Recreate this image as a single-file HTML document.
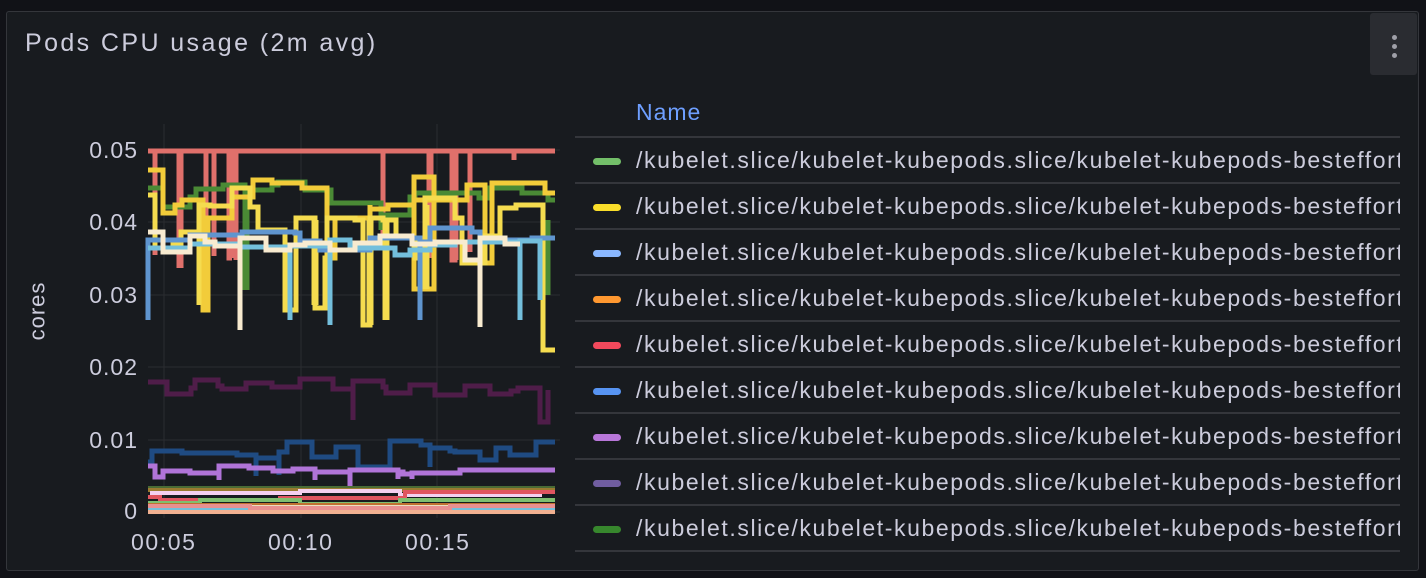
<!DOCTYPE html>
<html><head><style>
html,body{margin:0;padding:0;background:#111217;width:1426px;height:578px;overflow:hidden;font-family:"Liberation Sans",sans-serif}
.panel{position:absolute;left:6px;top:11px;width:1411px;height:558px;background:#181b1f;border:1px solid #34363b;border-radius:3px}
.title{position:absolute;left:25px;top:29px;font-size:25px;color:#ccccdc;letter-spacing:2.4px}
.menu{position:absolute;left:1370px;top:13px;width:47px;height:62px;background:#2a2c31;border-radius:3px}
.menu i{position:absolute;left:22px;width:5px;height:5px;border-radius:50%;background:#9fa0a8}
.ylab{position:absolute;color:#ccccdc;font-size:23px;text-align:right;width:70px;left:68px;letter-spacing:1px}
.xlab{position:absolute;color:#ccccdc;font-size:23px;top:529px;letter-spacing:1.6px}
.cores{position:absolute;left:8px;top:298px;color:#ccccdc;font-size:22px;letter-spacing:1px;transform:rotate(-90deg);transform-origin:center}
.legend{position:absolute;left:575px;top:90px;width:825px;height:470px;overflow:hidden}
.hdr{position:absolute;left:61px;top:9px;color:#6e9fff;font-size:23px;letter-spacing:1px}
.row{position:absolute;left:0;width:825px;height:46px;border-top:2px solid #34363b}
.row span{position:absolute;left:18px;top:20px;width:28px;height:7px;border-radius:4px}
.row b{position:absolute;left:61px;top:9px;font-weight:normal;color:#ccccdc;font-size:23px;letter-spacing:1.6px;white-space:nowrap}
</style></head><body>
<div class="panel"></div>
<div class="title">Pods CPU usage (2m avg)</div>
<div class="menu"><i style="top:22px"></i><i style="top:31px"></i><i style="top:40px"></i></div>
<div class="ylab" style="top:137px">0.05</div>
<div class="ylab" style="top:209px">0.04</div>
<div class="ylab" style="top:282px">0.03</div>
<div class="ylab" style="top:354px">0.02</div>
<div class="ylab" style="top:427px">0.01</div>
<div class="ylab" style="top:498px">0</div>
<div class="cores">cores</div>
<div class="xlab" style="left:131px">00:05</div>
<div class="xlab" style="left:268px">00:10</div>
<div class="xlab" style="left:405px">00:15</div>
<svg style="position:absolute;left:0;top:0" width="1426" height="578">
<g stroke="#2a2c31" stroke-width="1">
<line x1="164" y1="124" x2="164" y2="518"/><line x1="301" y1="124" x2="301" y2="518"/><line x1="437" y1="124" x2="437" y2="518"/>
<line x1="148" y1="150" x2="560" y2="150"/><line x1="148" y1="222" x2="560" y2="222"/><line x1="148" y1="295" x2="560" y2="295"/><line x1="148" y1="367" x2="560" y2="367"/><line x1="148" y1="440" x2="560" y2="440"/><line x1="148" y1="512" x2="560" y2="512"/>
</g>
<g fill="none" stroke-width="5" stroke-linejoin="miter">
<path stroke="#e0706b" d="M148 151H155V255V151H180V268V151H206V275V151H214V256V151H232V258V151H236V260V151H295V151H300V151H430V151H452V151V260H455V151H470V252V151H475V151H514V160V151H555M229 151V258H232M383 151V250"/>
<path stroke="#e0706b" stroke-width="7" d="M180 151V268M232 151V258M455 151V260M430 151V258"/>
<path stroke="#4a8a35" d="M148 188H163V207H190V197H196V189H223V185H245V190H272V185H278V182H305V190H331V203H381V230V215H385V218V215H410V197H415V193H475V193H479V198H490V188H522V193H548V200H555"/>
<path stroke="#4a8a35" stroke-width="7" d="M246 192V290M547 220V295"/>
<path stroke="#f2cc3a" d="M148 170H163V213H175V205H182V200H203V310H208V218H232V197H253V180H272V183H302V188H327V208H327V258H335V218H370V205H370V209H388V205H414V177H434V177V289H431H414V200H467V185H485V263H492V183H545V193H555"/>
<path stroke="#f5dc4f" d="M148 195H155V248H173V245H181V232H199V305V205H210V206H232V188H250V207H258V230H285V310H296V218H315V308H325V258H327V218H355V220H363V232V325H370V218H383V220H396V238H415V258H425V198H455V218H462V263H485V236H500V208H516V205H543V350H555"/>
<path stroke="#f5dc4f" stroke-width="7" d="M315 220V305M370 220V325M386 220V320M426 205V289"/>
<path stroke="#5f95cf" d="M148 238V320V240H190V235H242V232H295V233H300V241H320V250H370V245V238H420V320V242H430V228H472V232H480V240H532V238H555"/>
<path stroke="#73bfdc" d="M148 248H190V244H240V247H290V320V246H330V255V325V240H350V248H395V255H410V250H430V245H455V242H520V320V241H540V300"/>
<path stroke="#f8ebd0" d="M148 232H163V252H190V236H205V242H215V246H240V330V238H266V250H290V245H305V243H330V250H355V243H380V236H412V244H435V242H465V260H480V327V238H505V244H520"/>
<path stroke="#4f1d49" d="M148 382H167V394H191V388H195V380H218V386H222V389H246V383H272V387H300V379H333V389H353V420V381H383V387H386V393H410V385H435V395H465V386H490V394H511V391H518V388H540V422H548V390"/>
<path stroke="#1f4b82" d="M148 462H152V451H182V453H213V453H237V455H256V476V458H262V458H279V475V452H287V442H312V457H336V447H358V466V467H390V441H421V445H430V467V448H450V451H455V452H480V460H496V448H510V455H536V442H555"/>
<path stroke="#b074d8" d="M148 466H155V477H163V471H190V473H219V480V466H249V468H273V471H293V469H315V480V472H350V487V470H375V470H398V479V472H403V474H412V479V473H460V470H520V470H545V470H555"/>
</g>
<g fill="none" stroke-width="4">
<path stroke="#4a6b35" d="M148 488H555"/>
<path stroke="#9a7a30" d="M148 490H555"/>
<path stroke="#f5d0f0" d="M150 493H300V491H400V495H540V492H555"/>
<path stroke="#e05560" d="M148 497H160V500H280V498H405V492H555"/>
<path stroke="#7fbf70" d="M148 503H200V500H300V504H400V500H555"/>
<path stroke="#c07030" d="M148 505H555"/>
<path stroke="#eadfc0" d="M148 507H555"/>
<path stroke="#73bfdc" d="M148 509H555"/>
<path stroke="#e89090" d="M148 506H250V508H450V506H555"/>
<path stroke="#f0b090" d="M148 512H555"/>
</g>
</svg>
<div class="legend">
<div class="hdr">Name</div>
<div class="row" style="top:46px"><span style="background:#73bf69"></span><b>/kubelet.slice/kubelet-kubepods.slice/kubelet-kubepods-besteffort</b></div>
<div class="row" style="top:92px"><span style="background:#fade2a"></span><b>/kubelet.slice/kubelet-kubepods.slice/kubelet-kubepods-besteffort</b></div>
<div class="row" style="top:138px"><span style="background:#8ab8ff"></span><b>/kubelet.slice/kubelet-kubepods.slice/kubelet-kubepods-besteffort</b></div>
<div class="row" style="top:184px"><span style="background:#ff9830"></span><b>/kubelet.slice/kubelet-kubepods.slice/kubelet-kubepods-besteffort</b></div>
<div class="row" style="top:230px"><span style="background:#f2495c"></span><b>/kubelet.slice/kubelet-kubepods.slice/kubelet-kubepods-besteffort</b></div>
<div class="row" style="top:276px"><span style="background:#5794f2"></span><b>/kubelet.slice/kubelet-kubepods.slice/kubelet-kubepods-besteffort</b></div>
<div class="row" style="top:322px"><span style="background:#b877d9"></span><b>/kubelet.slice/kubelet-kubepods.slice/kubelet-kubepods-besteffort</b></div>
<div class="row" style="top:368px"><span style="background:#705da0"></span><b>/kubelet.slice/kubelet-kubepods.slice/kubelet-kubepods-besteffort</b></div>
<div class="row" style="top:414px"><span style="background:#37872d"></span><b>/kubelet.slice/kubelet-kubepods.slice/kubelet-kubepods-besteffort</b></div>
<div class="row" style="top:460px"></div>
</div>
</body></html>
